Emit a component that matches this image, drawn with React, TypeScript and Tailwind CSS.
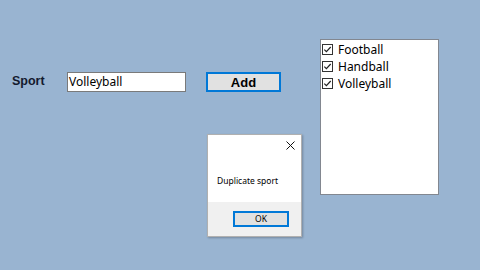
import React from "react";

const ui = { fontFamily: '"Noto Sans", "Open Sans", sans-serif' };
const bold = { fontFamily: '"Liberation Sans", Arial, sans-serif' };

function Check() {
  return (
    <svg width="11" height="11" viewBox="0 0 11 11" className="shrink-0">
      <rect x="0.5" y="0.5" width="10" height="10" fill="#fff" stroke="#333" />
      <path d="M2.3 5.6 L4.4 7.7 L8.7 3" fill="none" stroke="#222" strokeWidth="1.2" />
    </svg>
  );
}

export default function App() {
  const items = ["Football", "Handball", "Volleyball"];
  return (
    <div className="relative w-[480px] h-[270px] overflow-hidden bg-[#99b4d1]">
      <div className="flex items-start pl-[12px] pt-[39px]">
        <div className="flex items-center mt-[33px] h-[20px]">
          <span className="w-[55px] text-[12.5px] font-bold text-[#141a2e] pb-[2px]" style={bold}>
            Sport
          </span>
          <div
            className="w-[119px] h-[20px] bg-white border border-[#7a7a7a] flex items-center pl-[1px] text-[12px] text-black"
            style={ui}
          >
            Volleyball
          </div>
          <button
            className="ml-[20px] w-[75px] h-[20px] bg-[#e1e1e1] border-2 border-[#0078d7] flex items-center justify-center text-[13px] font-bold text-black leading-none"
            style={bold}
          >
            Add
          </button>
        </div>
        <div className="ml-[39px] w-[119px] h-[156px] bg-white border border-[#828790] pt-[1px] pl-[1px]">
          {items.map((t) => (
            <div key={t} className="flex items-center h-[17px] gap-[5px] text-[12px] text-black" style={ui}>
              <Check />
              <span className="leading-none">{t}</span>
            </div>
          ))}
        </div>
      </div>

      <div className="absolute left-[207px] top-[134px] w-[95px] h-[103px] bg-white border border-[#b0b0b0] shadow-[1px_1px_2px_rgba(0,0,0,0.25)] flex flex-col">
        <div className="flex justify-end pr-[6px] pt-[6px] h-[40px]">
          <svg width="9" height="9" viewBox="0 0 9 9">
            <path d="M0.5 0.5 L8.5 8.5 M8.5 0.5 L0.5 8.5" stroke="#111" strokeWidth="1" />
          </svg>
        </div>
        <div className="flex-1 pl-[9px] text-[8.5px] text-black" style={ui}>
          Duplicate sport
        </div>
        <div className="h-[34px] bg-[#f0f0f0] flex items-center justify-end pr-[12px]">
          <button
            className="w-[56px] h-[16px] bg-[#e1e1e1] border-2 border-[#0078d7] flex items-center justify-center text-[8.5px] text-black leading-none"
            style={ui}
          >
            OK
          </button>
        </div>
      </div>
    </div>
  );
}
